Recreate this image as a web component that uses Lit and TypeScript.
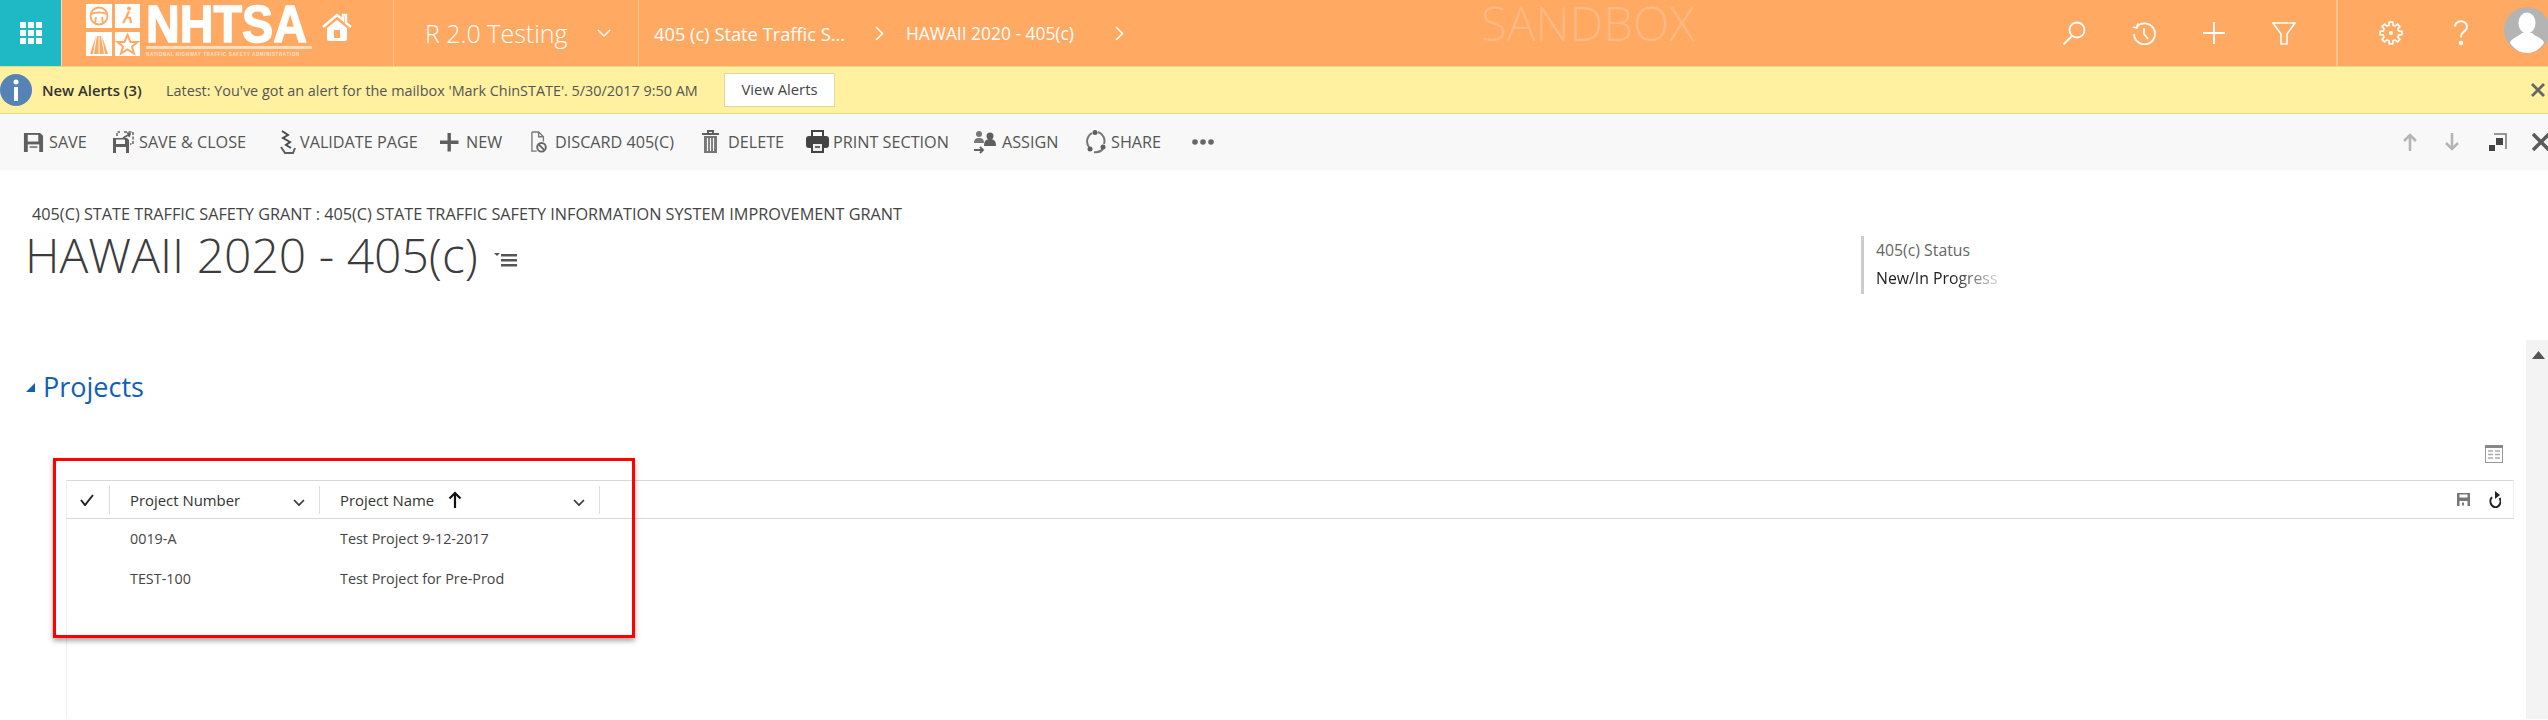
import { LitElement, html, css, svg } from "lit";
import { customElement } from "lit/decorators.js";

const G = "#5f5f5f";
const saveI = svg`<path d="M1 1h17l3 3v17H1z" fill="${G}"/><rect x="5" y="3" width="11" height="7" fill="#f8f8f8"/><rect x="5" y="13" width="12" height="8" fill="#f8f8f8"/><rect x="7" y="15" width="8" height="1.5" fill="${G}"/>`;
const saveCloseI = svg`<path d="M1 7h14l2 2v13H1z" fill="${G}"/><rect x="4" y="8.5" width="9" height="4.5" fill="#f8f8f8"/><rect x="4" y="16" width="10" height="6" fill="#f8f8f8"/><path d="M5 5V1h3M12 1h9v12h-3" fill="none" stroke="${G}" stroke-width="1.4" stroke-dasharray="3 1.5"/><path d="M11 7l7-4m-3-1l3 1-1 3" fill="none" stroke="${G}" stroke-width="1.6"/>`;
const validateI = svg`<path d="M5 1l6 4-5 3 7 4-4 3 5 3" fill="none" stroke="#4c4c4c" stroke-width="2"/><path d="M4 17l4 6h8l2-5" fill="none" stroke="${G}" stroke-width="2"/>`;
const plusI = svg`<path d="M7.5 0h3.4v7.5H18.500v3.400H10.900V18.500H7.500V10.900H0V7.500H7.500z" fill="${G}"/>`;
const discardI = svg`<path d="M2 1h7l5 5v5M2 1v20h5M9 1v5h5" fill="none" stroke="#777" stroke-width="1.4"/><circle cx="12" cy="17" r="4.500" fill="none" stroke="#666" stroke-width="2"/><path d="M9 14l6 6" stroke="#666" stroke-width="2"/>`;
const deleteI = svg`<path d="M1 4h17M7 3V1h5v2" fill="none" stroke="${G}" stroke-width="2"/><path d="M3 6h13v17H3z" fill="#777"/><path d="M6.500 8v13M9.500 8v13M12.500 8v13" stroke="#f8f8f8" stroke-width="1.200"/>`;
const printI = svg`<path d="M6 1h11v6H6z" fill="#fff" stroke="#444" stroke-width="2"/><rect x="0" y="6" width="23" height="12" rx="3" fill="#444"/><rect x="5" y="13" width="13" height="10" fill="#444"/><rect x="7" y="14" width="9" height="7" fill="#eee"/><rect x="9" y="16" width="5" height="2" fill="#666"/>`;
const assignI = svg`<circle cx="6" cy="4" r="3" fill="#777"/><path d="M1 13c0-4 2-5 5-5s5 1 5 5z" fill="#777"/><circle cx="17" cy="6" r="3.500" fill="${G}"/><path d="M11 16c0-5 2-7 6-7s6 2 6 7z" fill="${G}"/><path d="M1 20h9m-3-3l3 3-3 3" fill="none" stroke="${G}" stroke-width="1.800"/>`;
const shareI = svg`<path d="M7 3a9.500 9.500 0 0 0-3 14M9 22a9.500 9.500 0 0 0 9-3M13 2a9.500 9.500 0 0 1 6 12" fill="none" stroke="#777" stroke-width="2"/><circle cx="10" cy="2.500" r="2.500" fill="${G}"/><circle cx="5" cy="19" r="2.500" fill="${G}"/><circle cx="18" cy="17" r="2.500" fill="${G}"/>`;
const dotsI = svg`<circle cx="3" cy="3" r="2.800" fill="#666"/><circle cx="11" cy="3" r="2.800" fill="#666"/><circle cx="19" cy="3" r="2.800" fill="#666"/>`;

function gearPath(cx: number, cy: number, ro: number, ri: number, teeth: number) {
  const pts: string[] = [];
  const step = (Math.PI * 2) / teeth;
  for (let i = 0; i < teeth; i++) {
    const a = i * step - Math.PI / 2;
    const offs: [number, number][] = [[-0.32, ri], [-0.2, ro], [0.2, ro], [0.32, ri]];
    for (const [o, r] of offs) {
      const t = a + o * step;
      pts.push(`${(cx + r * Math.cos(t)).toFixed(2)} ${(cy + r * Math.sin(t)).toFixed(2)}`);
    }
  }
  return "M" + pts.join("L") + "Z";
}

const tools = [
  { w: 89, iw: 26, vb: "0 0 22 22", s: 21, icon: saveI, label: "SAVE" },
  { w: 165, iw: 27, vb: "0 0 23 23", s: 23, icon: saveCloseI, label: "SAVE & CLOSE" },
  { w: 163, iw: 23, vb: "0 0 20 24", s: 24, icon: validateI, label: "VALIDATE PAGE" },
  { w: 90, iw: 26, vb: "0 0 19 19", s: 19, icon: plusI, label: "NEW" },
  { w: 171, iw: 25, vb: "0 0 18 24", s: 23, icon: discardI, label: "DISCARD 405(C)" },
  { w: 105, iw: 27, vb: "0 0 19 24", s: 24, icon: deleteI, label: "DELETE" },
  { w: 167, iw: 27, vb: "0 0 23 24", s: 24, icon: printI, label: "PRINT SECTION" },
  { w: 112, iw: 29, vb: "0 0 24 24", s: 24, icon: assignI, label: "ASSIGN" },
  { w: 107, iw: 26, vb: "0 0 21 24", s: 24, icon: shareI, label: "SHARE" },
];

@customElement("app-root")
export class AppRoot extends LitElement {
  static styles = css`
    :host { display: block; position: relative; width: 2548px; height: 720px; overflow: hidden; background: #fff;
      font-family: "Open Sans", "Noto Sans", sans-serif; color: #444; }
    svg { display: block; flex: none; }
    .nav { display: flex; height: 66px; background: #ffa963; color: #fff; position: relative; }
    .waffle { width: 61px; background: #1fb9c6; border-right: 1px solid #ffd9b0; display: flex; align-items: center; justify-content: center; }
    .logo { width: 332px; border-right: 1px solid #ffc48f; display: flex; padding-left: 24px; box-sizing: border-box; }
    .brand { width: 166px; margin-left: 6px; height: 66px; }
    .brand b { display: block; width: max-content; font: 900 52.500px/38px "Liberation Sans", sans-serif; -webkit-text-stroke: 1.400px #fff; margin-top: 5px; white-space: nowrap; transform: scaleX(.89); transform-origin: 0 50%; }
    .brand i { display: block; height: 2.500px; background: #ffdcbc; margin-top: 3px; }
    .brand small { display: block; font: 700 4.500px/6px "Liberation Sans", sans-serif; letter-spacing: .64px; margin-top: 3px; white-space: nowrap; color: #ffe3cb; }
    .home { margin: 13px 0 0 10px; }
    .app { width: 245px; border-right: 1px solid #ffc48f; display: flex; align-items: center; padding-left: 31px; box-sizing: border-box; font-size: 25px; font-weight: 300; }
    .crumbs { display: flex; align-items: center; padding-left: 15px; font-size: 18.300px; flex: 1; }
    .c1 { width: 195px; white-space: nowrap; }
    .c2 { width: 183px; white-space: nowrap; font-size: 17.400px; }
    .cv { width: 57px; }
    .nicons { display: flex; align-items: center; position: relative; }
    .nicon { width: 70px; height: 66px; display: flex; align-items: center; justify-content: center; }
    .nsep { width: 2px; height: 66px; background: #ffc48f; margin: 0 18px 0 17px; }
    .avatar { width: 44px; height: 66px; margin-left: 8px; }
    .sandbox { position: absolute; left: 1481px; top: 0; font-size: 47.500px; font-weight: 300; color: #ffb984; line-height: 46px; }

    .alert { height: 48px; box-sizing: border-box; background: #fff1a0; border-top: 1px solid #e3dc85; border-bottom: 1px solid #e3dc85; display: flex; align-items: center; font-size: 14.400px; color: #555; }
    .ii { margin-right: 10px; }
    .alert b { color: #333; font-weight: 600; width: 124px; white-space: nowrap; font-size: 14.800px; }
    .latest { width: 558px; white-space: nowrap; }
    .va { width: 111px; height: 34px; box-sizing: border-box; border: 1px solid #e0da9a; background: #fff; text-align: center; line-height: 30px; color: #444; font-size: 14.800px; }
    .aclose { margin-left: auto; margin-right: 3px; }

    .tools { height: 56px; background: #f8f8f8; display: flex; align-items: center; padding-left: 23px; font-size: 16.200px; color: #555; }
    .tool { display: flex; align-items: center; white-space: nowrap; }
    .ti { display: flex; align-items: center; }
    .tright { margin-left: auto; display: flex; align-items: center; margin-right: -2px; }

    .head { display: flex; height: 170px; }
    .hl { width: 1861px; }
    .crumb { padding: 34px 0 0 32px; font-size: 16.250px; line-height: 20px; color: #444; white-space: nowrap; }
    .title { display: flex; padding-left: 25px; height: 62px; align-items: center; font-size: 48px; font-weight: 300; line-height: 60px; color: #3c3c3c; white-space: nowrap; }
    .title svg { margin: 10px 0 0 16px; }
    .status { margin-top: 66px; height: 58px; border-left: 3px solid #ccc; padding-left: 12px; font-size: 15.800px; color: #666; }
    .status div { line-height: 28px; }
    .status .v { color: #222; width: 132px; white-space: nowrap; overflow: hidden; -webkit-mask-image: linear-gradient(90deg, #000 58%, transparent 100%); mask-image: linear-gradient(90deg, #000 58%, transparent 100%); }

    .sec { display: flex; height: 379px; }
    .left { flex: 1; min-width: 0; }
    .scroll { width: 22px; background: #f3f3f3; position: relative; }
    .scroll svg { margin: 11px 0 0 6px; }
    .ph { display: flex; align-items: center; height: 40px; margin-top: 26px; padding-left: 26px; font-size: 27px; color: #1160b7; }
    .ph svg { margin: 2px 8px 0 0; }
    .cal { display: flex; justify-content: flex-end; padding-right: 23px; height: 74px; padding-top: 39px; box-sizing: border-box; }
    .grid { margin-left: 66px; width: 2448px; height: 239px; box-sizing: border-box; border-left: 1px solid #eee; }
    .ghead { display: flex; height: 39px; box-sizing: border-box; border-top: 1px solid #d8d8d8; border-bottom: 1px solid #d8d8d8; border-right: 1px solid #eee; align-items: center; font-size: 14.900px; color: #333; }
    .gc { height: 28px; display: flex; align-items: center; border-right: 1px solid #ddd; box-sizing: border-box; position: relative; white-space: nowrap; }
    .gc0 { width: 43px; justify-content: center; padding-right: 3px; }
    .gc1 { width: 210px; padding-left: 20px; }
    .gc2 { width: 280px; padding-left: 20px; }
    .gc svg.ch { position: absolute; right: 14px; top: 13px; }
    .gc2 svg.ar { margin-left: 14px; }
    .gtools { margin-left: auto; display: flex; align-items: center; padding-right: 12px; gap: 19px; }
    .row { display: flex; height: 40px; align-items: center; font-size: 14.350px; color: #444; white-space: nowrap; margin-top: -1px; margin-bottom: 1px; }
    .row span:nth-child(1) { width: 63px; }
    .row span:nth-child(2) { width: 210px; }
    .mark { position: absolute; left: 53px; top: 458px; width: 582px; height: 180px; box-sizing: border-box; border: 3px solid #f00; box-shadow: 0 3px 5px rgba(0,0,0,.35); pointer-events: none; }
  `;

  render() {
    return html`
      <div class="nav">
        <div class="waffle"><svg width="22" height="22" viewBox="0 0 22 22" fill="#fff">
          ${[0, 8, 16].map((y) => [0, 8, 16].map((x) => svg`<rect x="${x}" y="${y}" width="6" height="6"/>`))}</svg></div>
        <div class="logo">
          <svg width="54" height="66" viewBox="0 0 54 66">
            <g fill="#fff">
              <rect x="0" y="4" width="26" height="24"/><rect x="29" y="4" width="25" height="24"/>
              <rect x="0" y="32" width="26" height="24"/><rect x="29" y="32" width="25" height="24"/>
            </g>
            <g fill="none" stroke="#ffa963" stroke-width="1.800">
              <circle cx="13" cy="16" r="8.500"/><path d="M5 14c5-2 11-2 16 0M10 17l-1 7M16 17l1 7"/>
              <path d="M43 11l-3 7-3 5M40 17l4 1 1 5" stroke-width="2.200"/>
            </g>
            <circle cx="43" cy="8.500" r="2" fill="#ffa963"/>
            <path d="M10 36h6l6 18H4z" fill="#ffa963"/><path d="M13 36v18M10.500 36l-3 18M15.500 36l3 18" stroke="#fff" stroke-width="1"/>
            <path d="M41.500 35l3 7h7l-5.500 4.500 2 7-6.500-4-6.500 4 2-7-5.500-4.500h7z" fill="none" stroke="#ffa963" stroke-width="2"/>
          </svg>
          <div class="brand"><b>NHTSA</b><i></i><small>NATIONAL HIGHWAY TRAFFIC SAFETY ADMINISTRATION</small></div>
          <svg class="home" width="30" height="28" viewBox="0 0 30 28">
            <path d="M1 14L15 2l6 5V2h3v8l5 4" fill="none" stroke="#fff" stroke-width="2.400"/>
            <path d="M5 15l10-8 10 8v11a2 2 0 0 1-2 2H7a2 2 0 0 1-2-2z" fill="#fff"/><rect x="12" y="17" width="6" height="8" fill="#ffa963"/>
          </svg>
        </div>
        <div class="app">R 2.0 Testing
          <svg style="margin-left:29px" width="14" height="9" viewBox="0 0 14 9"><path d="M1 1l6 6 6-6" fill="none" stroke="#fff" stroke-width="1.400"/></svg></div>
        <div class="crumbs">
          <span class="c1">405 (c) State Traffic S...</span>
          <span class="cv"><svg style="margin-left:26px" width="9" height="15" viewBox="0 0 9 15"><path d="M1 1l6.500 6.500L1 14" fill="none" stroke="#fff" stroke-width="1.500"/></svg></span>
          <span class="c2">HAWAII 2020 - 405(c)</span>
          <span class="cv"><svg style="margin-left:26px" width="9" height="15" viewBox="0 0 9 15"><path d="M1 1l6.500 6.500L1 14" fill="none" stroke="#fff" stroke-width="1.500"/></svg></span>
        </div>
        <div class="nicons">
          <div class="nicon"><svg width="24" height="24" viewBox="0 0 24 24" fill="none" stroke="#fff" stroke-width="1.800"><circle cx="15" cy="9" r="7.500"/><path d="M10 15l-8.500 8.500"/></svg></div>
          <div class="nicon"><svg width="24" height="24" viewBox="0 0 24 24" fill="none" stroke="#fff" stroke-width="1.800"><path d="M4.500 6a10.500 10.500 0 1 1-2.500 7"/><path d="M1 6l4 1 1-4.500"/><path d="M12 7v6l4 5"/></svg></div>
          <div class="nicon"><svg width="22" height="22" viewBox="0 0 22 22" stroke="#fff" stroke-width="1.800"><path d="M11 0v22M0 11h22"/></svg></div>
          <div class="nicon"><svg width="24" height="24" viewBox="0 0 24 24" fill="none" stroke="#fff" stroke-width="1.600"><path d="M1 2h22l-8 11v10H9V13z"/></svg></div>
          <div class="nsep"></div>
          <div class="nicon"><svg width="24" height="24" viewBox="0 0 24 24" fill="none" stroke="#fff" stroke-width="1.700"><path d="${gearPath(12, 12, 11, 8, 8)}"/><circle cx="12" cy="12" r="2" fill="#fff" stroke="none"/></svg></div>
          <div class="nicon"><svg width="14" height="26" viewBox="0 0 14 26" fill="none" stroke="#fff" stroke-width="2"><path d="M1 6.500a6 5.500 0 1 1 9 5c-2 1.500-3 2.500-3 6"/><circle cx="7" cy="23" r="1.300" fill="#fff"/></svg></div>
          <svg class="avatar" viewBox="0 0 44 66">
            <ellipse cx="23" cy="30" rx="23" ry="23" fill="#b4b4b4"/>
            <ellipse cx="23" cy="23" rx="8.500" ry="10.500" fill="#fff"/>
            <path d="M6 43c1-5 8-6 12-10h10c4 4 11 5 12 10-4 6-10 10-17 10S10 49 6 43z" fill="#fff"/>
          </svg>
        </div>
        <div class="sandbox">SANDBOX</div>
      </div>

      <div class="alert">
        <svg class="ii" width="32" height="32" viewBox="0 0 32 32"><circle cx="16" cy="16" r="16" fill="#5583b5"/><circle cx="16" cy="8" r="2.500" fill="#fff"/><rect x="14" y="13" width="4" height="14" fill="#fff"/></svg>
        <b>New Alerts (3)</b>
        <span class="latest">Latest: You've got an alert for the mailbox 'Mark ChinSTATE'. 5/30/2017 9:50 AM</span>
        <span class="va">View Alerts</span>
        <svg class="aclose" width="14" height="14" viewBox="0 0 14 14" stroke="#666" stroke-width="2.800"><path d="M1 1l12 12M13 1L1 13"/></svg>
      </div>

      <div class="tools">
        ${tools.map((t) => html`<div class="tool" style="width:${t.w}px">
          <span class="ti" style="width:${t.iw}px"><svg width="${t.s}" height="${t.s}" viewBox="${t.vb}" preserveAspectRatio="xMinYMid meet">${t.icon}</svg></span>${t.label}</div>`)}
        <svg width="22" height="6" viewBox="0 0 22 6">${dotsI}</svg>
        <div class="tright">
          <svg width="14" height="18" viewBox="0 0 14 18" fill="none" stroke="#b5b5b5" stroke-width="2.600"><path d="M7 18V2M1 8l6-6 6 6"/></svg>
          <svg style="margin-left:28px" width="14" height="18" viewBox="0 0 14 18" fill="none" stroke="#b5b5b5" stroke-width="2.600"><path d="M7 0v16M1 10l6 6 6-6"/></svg>
          <svg style="margin-left:30px" width="18" height="18" viewBox="0 0 18 18"><path d="M5 1h12v15" fill="none" stroke="#777" stroke-width="1.500"/><rect x="7" y="5" width="7" height="7" fill="#444"/><rect x="0" y="12" width="6" height="6" fill="#444"/></svg>
          <svg style="margin-left:25px" width="18" height="18" viewBox="0 0 18 18" stroke="#5a5a5a" stroke-width="3.600"><path d="M1 1l16 16M17 1L1 17"/></svg>
        </div>
      </div>

      <div class="head">
        <div class="hl">
          <div class="crumb">405(C) STATE TRAFFIC SAFETY GRANT : 405(C) STATE TRAFFIC SAFETY INFORMATION SYSTEM IMPROVEMENT GRANT</div>
          <div class="title">HAWAII 2020 - 405(c)
            <svg width="24" height="15" viewBox="0 0 24 15" fill="#555"><path d="M0 0h6L3 3z"/><rect x="7" y="1" width="16" height="2.500"/><rect x="7" y="6" width="16" height="2.500"/><rect x="7" y="11" width="16" height="2.500"/></svg>
          </div>
        </div>
        <div class="status"><div>405(c) Status</div><div class="v">New/In Progress</div></div>
      </div>

      <div class="sec">
        <div class="left">
          <div class="ph"><svg width="9" height="9" viewBox="0 0 9 9"><path d="M9 0v9H0z" fill="#1160b7"/></svg>Projects</div>
          <div class="cal"><svg width="18" height="18" viewBox="0 0 18 18"><rect x=".5" y=".5" width="17" height="17" fill="#fff" stroke="#999"/><rect x="0" y="0" width="18" height="3" fill="#888"/><path d="M3 6h5M10 6h5M3 9.500h5M10 9.500h5M3 13h5M10 13h5" stroke="#aaa" stroke-width="1.500"/></svg></div>
          <div class="grid">
            <div class="ghead">
              <div class="gc gc0"><svg width="14" height="12" viewBox="0 0 14 12" fill="none" stroke="#222" stroke-width="2"><path d="M1 6l4 5 8-10"/></svg></div>
              <div class="gc gc1">Project Number<svg class="ch" width="12" height="8" viewBox="0 0 12 8" fill="none" stroke="#333" stroke-width="1.600"><path d="M1 1l5 5 5-5"/></svg></div>
              <div class="gc gc2">Project Name<svg class="ar" width="14" height="17" viewBox="0 0 14 17" fill="none" stroke="#111" stroke-width="2.200"><path d="M7 17V2M1.500 7.500L7 2l5.500 5.500"/></svg><svg class="ch" width="12" height="8" viewBox="0 0 12 8" fill="none" stroke="#333" stroke-width="1.600"><path d="M1 1l5 5 5-5"/></svg></div>
              <div class="gtools">
                <svg width="13" height="13" viewBox="0 0 13 13"><path d="M0 0h13v13H0z" fill="#777"/><rect x="2.500" y="1.500" width="8" height="3" fill="#fff"/><rect x="2.500" y="8" width="8" height="5" fill="#fff"/><rect x="5" y="9.500" width="2" height="3" fill="#777"/></svg>
                <svg width="12" height="17" viewBox="0 0 12 17" fill="none" stroke="#222" stroke-width="2"><path d="M3 6.200A5 5.800 0 1 0 10.500 7"/><path d="M6 0v8l5-4z" fill="#222" stroke="none"/></svg>
              </div>
            </div>
            <div class="row"><span></span><span>0019-A</span><span>Test Project 9-12-2017</span></div>
            <div class="row"><span></span><span>TEST-100</span><span>Test Project for Pre-Prod</span></div>
          </div>
        </div>
        <div class="scroll"><svg width="13" height="8" viewBox="0 0 13 8"><path d="M6.500 0L13 8H0z" fill="#555"/></svg></div>
      </div>
      <div class="mark"></div>
    `;
  }
}
